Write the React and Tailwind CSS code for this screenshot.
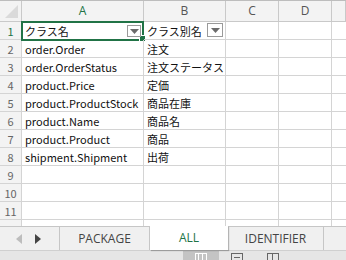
import React from "react";

const rows = [
  ["クラス名", "クラス別名"],
  ["order.Order", "注文"],
  ["order.OrderStatus", "注文ステータス"],
  ["product.Price", "定価"],
  ["product.ProductStock", "商品在庫"],
  ["product.Name", "商品名"],
  ["product.Product", "商品"],
  ["shipment.Shipment", "出荷"],
  ["", ""],
  ["", ""],
  ["", ""],
  ["", ""],
];

function FilterBtn({ w, h }) {
  return (
    <div
      className="absolute right-[2px] bottom-[2px] border border-[#9a9a9a] bg-white flex items-center justify-center"
      style={{ width: w, height: h }}
    >
      <svg width="9" height="5" viewBox="0 0 9 5">
        <polygon points="0,0 9,0 4.5,5" fill="#6b6b6b" />
      </svg>
    </div>
  );
}

export default function App() {
  const font = { fontFamily: '"Noto Sans CJK JP", "Noto Sans", sans-serif' };
  return (
    <div className="w-[346px] h-[260px] overflow-hidden bg-white relative" style={font}>
      {/* sheet */}
      <div className="h-[226px] overflow-hidden border-t border-[#bdbdbd]">
        <div className="grid grid-cols-[22px_122px_82px_53px_53px_1fr]">
          {/* header row */}
          <div className="h-[21px] bg-[#f3f3f3] border-r border-b border-[#c9c9c9] relative">
            <svg className="absolute right-[3px] bottom-[3px]" width="13" height="13" viewBox="0 0 13 13">
              <polygon points="13,0 13,13 0,13" fill="#dadada" />
            </svg>
          </div>
          {["A", "B", "C", "D", ""].map((c, i) => (
            <div
              key={i}
              className={`h-[21px] bg-[#f3f3f3] border-r border-b border-[#c9c9c9] flex items-center justify-center text-[12px] ${
                i === 0 ? "text-[#217346]" : "text-[#555]"
              }`}
              style={{ fontFamily: '"Open Sans", sans-serif' }}
            >
              {c}
            </div>
          ))}
          {rows.map((r, ri) => (
            <React.Fragment key={ri}>
              <div
                className={`h-[18px] bg-[#f3f3f3] border-r border-b border-[#d4d4d4] flex items-end justify-center text-[11px] leading-[16px] ${
                  ri === 0 ? "text-[#217346]" : "text-[#666]"
                }`}
              >
                {ri + 1}
              </div>
              <div className="h-[18px] border-r border-b border-[#d4d4d4] relative flex items-end pl-[3px] text-[11px] leading-[16px] text-[#111] whitespace-nowrap">
                {r[0]}
                {ri === 0 && (
                  <>
                    <div className="absolute left-[-1px] top-[-1px] w-[123px] h-[20px] border-2 border-[#217346]"></div>
                    <div className="absolute right-[-3px] bottom-[-3px] w-[5px] h-[5px] bg-[#217346] border border-white box-content"></div>
                    <FilterBtn w={14} h={12} />
                  </>
                )}
              </div>
              <div className="h-[18px] border-r border-b border-[#d4d4d4] relative flex items-end pl-[3px] text-[11px] leading-[16px] text-[#111] whitespace-nowrap">
                {r[1]}
                {ri === 0 && <FilterBtn w={16} h={14} />}
              </div>
              <div className="h-[18px] border-r border-b border-[#d4d4d4]"></div>
              <div className="h-[18px] border-r border-b border-[#d4d4d4]"></div>
              <div className="h-[18px] border-b border-[#d4d4d4]"></div>
            </React.Fragment>
          ))}
        </div>
      </div>
      {/* tab bar */}
      <div
        className="h-[24px] flex bg-[#f0f0f0] border-t border-[#c6c6c6] text-[12px]"
        style={{ fontFamily: '"Open Sans", sans-serif' }}
      >
        <div className="w-[60px] flex items-center justify-center gap-[13px] border-r border-[#c6c6c6] pr-[2px]">
          <svg width="6" height="10" viewBox="0 0 6 10">
            <polygon points="6,0 6,10 0,5" fill="#bdbdbd" />
          </svg>
          <svg width="6" height="10" viewBox="0 0 6 10">
            <polygon points="0,0 0,10 6,5" fill="#444" />
          </svg>
        </div>
        <div className="w-[90px] flex items-center justify-center text-[#444] border-r border-[#c6c6c6]">PACKAGE</div>
        <div className="w-[78px] -mt-px flex items-center justify-center text-[#217346] bg-white shadow-[1px_1px_1px_rgba(0,0,0,0.25)] relative z-10">ALL</div>
        <div className="w-[96px] flex items-center justify-center text-[#444] border-r border-[#c6c6c6]">IDENTIFIER</div>
        <div className="flex-1"></div>
      </div>
      {/* status bar */}
      <div className="h-[10px] bg-[#e6e6e6] border-t border-[#d0d0d0] flex overflow-hidden">
        <div className="ml-[183px] w-[36px] bg-[#c4c4c4] flex justify-center pt-[2px]">
          <div className="w-[12px] h-[10px] border border-white grid grid-cols-3">
            <div className="border-r border-white"></div>
            <div className="border-r border-white"></div>
            <div></div>
          </div>
        </div>
        <div className="w-[36px] flex justify-center pt-[2px]">
          <div className="w-[12px] h-[10px] border border-[#666] flex justify-center">
            <div className="w-[6px] h-[4px] border-b border-[#666]"></div>
          </div>
        </div>
        <div className="w-[36px] flex justify-center pt-[2px]">
          <div className="w-[12px] h-[10px] border border-[#666] grid grid-cols-2">
            <div className="border-r border-[#666]"></div>
            <div></div>
          </div>
        </div>
      </div>
    </div>
  );
}
